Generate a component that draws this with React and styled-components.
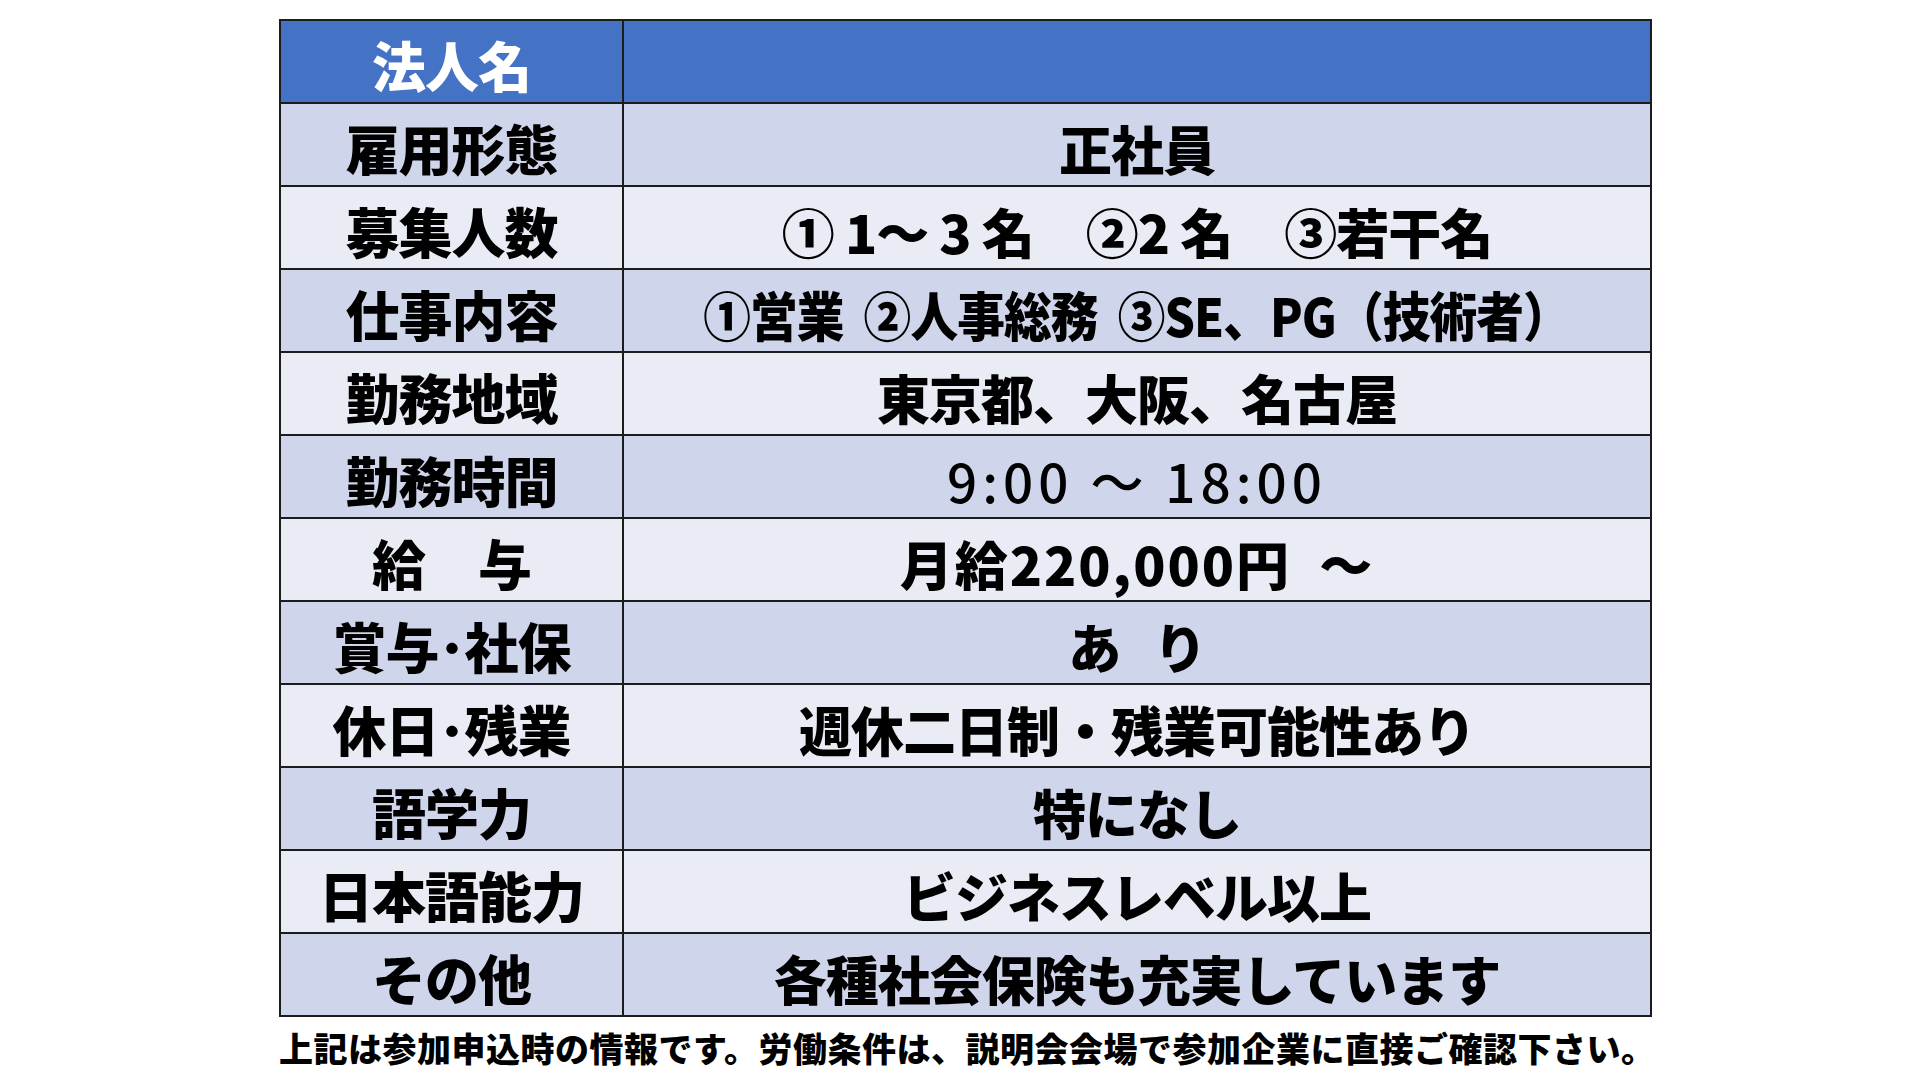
import React from "react";
import styled, { createGlobalStyle } from "styled-components";

const GlobalStyle = createGlobalStyle`
  html, body {
    margin: 0;
    padding: 0;
    background: #ffffff;
  }
  body {
    width: 1920px;
    height: 1080px;
    overflow: hidden;
    font-family: "Noto Sans CJK JP", "Noto Sans", sans-serif;
    color: #000000;
  }
`;

const Page = styled.div`
  width: 1920px;
  height: 1080px;
  box-sizing: border-box;
  padding: 19px 0 0 279px;
`;

const Table = styled.table`
  border-collapse: collapse;
  border: 2px solid #1c1c1c;
  table-layout: fixed;
  width: 1373px;
`;

const Row = styled.tr`
  height: 83px;
  background: ${(p) =>
    p.$head ? "#4472c4" : p.$dark ? "#cfd5ea" : "#e9ebf5"};
`;

const Label = styled.th`
  width: 341px;
  padding: 7px 0 0;
  border: 2px solid #1c1c1c;
  font-size: 54px;
  font-weight: 900;
  line-height: 1;
  text-align: center;
  white-space: pre;
  color: ${(p) => (p.$head ? "#ffffff" : "#000000")};
  letter-spacing: -1px;
`;

const Value = styled.td`
  padding: 8px 0 0;
  border: 2px solid #1c1c1c;
  text-align: center;
  line-height: 1;
  white-space: pre;
`;

const ValueText = styled.span`
  display: inline-block;
  font-size: 53px;
  font-weight: ${(p) => (p.$light ? 500 : 900)};
  letter-spacing: ${(p) => p.$spacing ?? -1}px;
  transform: scaleX(${(p) => p.$squeeze || 1});
  transform-origin: center;
`;

const Note = styled.p`
  margin: 14px 0 0;
  font-size: 34px;
  font-weight: 900;
  line-height: 1;
  letter-spacing: 0.5px;
  white-space: nowrap;
`;

const rows = [
  { label: "雇用形態", value: "正社員" },
  { label: "募集人数", value: "① 1～ 3 名　②2 名　③若干名" },
  { label: "仕事内容", value: "①営業  ②人事総務  ③SE、PG（技術者）", squeeze: 0.9 },
  { label: "勤務地域", value: "東京都、大阪、名古屋" },
  { label: "勤務時間", value: "9:00 ～ 18:00", light: true, spacing: 5 },
  { label: "給　与", value: "月給220,000円  ～", spacing: 2 },
  { label: "賞与･社保", value: "あ   り" },
  { label: "休日･残業", value: "週休二日制・残業可能性あり" },
  { label: "語学力", value: "特になし" },
  { label: "日本語能力", value: "ビジネスレベル以上" },
  { label: "その他", value: "各種社会保険も充実しています" },
];

const App = () => {
  return (
    <Page>
      <GlobalStyle />
      <Table>
        <tbody>
          <Row $head>
            <Label $head>法人名</Label>
            <Value />
          </Row>
          {rows.map((r, i) => (
            <Row key={r.label} $dark={i % 2 === 0}>
              <Label>{r.label}</Label>
              <Value>
                <ValueText
                  $squeeze={r.squeeze}
                  $light={r.light}
                  $spacing={r.spacing}
                >
                  {r.value}
                </ValueText>
              </Value>
            </Row>
          ))}
        </tbody>
      </Table>
      <Note>
        上記は参加申込時の情報です。労働条件は、説明会会場で参加企業に直接ご確認下さい。
      </Note>
    </Page>
  );
};

export default App;
